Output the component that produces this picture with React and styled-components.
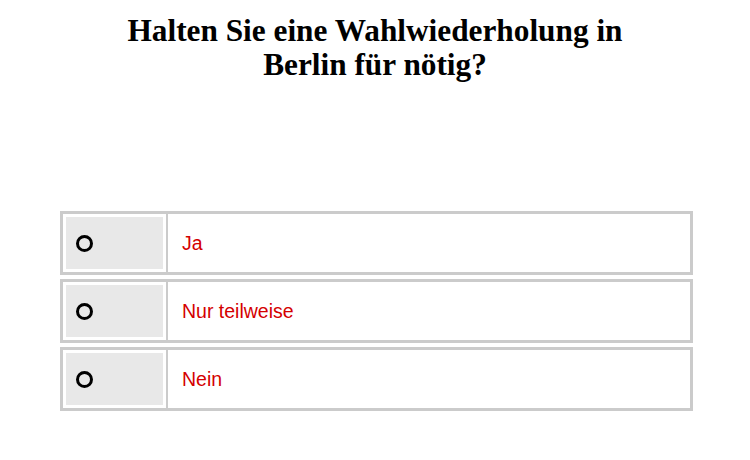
import React from 'react'
import styled, { createGlobalStyle } from 'styled-components'

const GlobalStyle = createGlobalStyle`
    body {
        margin: 0;
        background: #fff;
    }
`;

const Page = styled.div`
    width: 750px;
    height: 460px;
    display: flex;
    flex-direction: column;
    align-items: center;
`;

const Title = styled.h1`
    margin: 14px 0 0;
    width: 530px;
    text-align: center;
    font-family: "Liberation Serif", "Times New Roman", serif;
    font-weight: bold;
    font-size: 31.3px;
    line-height: 34px;
    color: #000;
`;

const Options = styled.div`
    align-self: flex-start;
    margin: 129px 0 0 60px;
    width: 633px;
    display: flex;
    flex-direction: column;
    gap: 4px;
`;

const Row = styled.label`
    display: flex;
    height: 64px;
    box-sizing: border-box;
    border: 3px solid #cbcbcb;
    cursor: pointer;
`;

const RadioCell = styled.div`
    width: 103px;
    padding: 3px;
    box-sizing: border-box;
    display: flex;
`;

const RadioBox = styled.div`
    flex: 1;
    background: #e8e8e8;
    display: flex;
    align-items: center;
    padding-left: 10px;
`;

const Circle = styled.span`
    width: 17px;
    height: 17px;
    box-sizing: border-box;
    border: 3px solid #000;
    border-radius: 50%;
`;

const Answer = styled.div`
    flex: 1;
    display: flex;
    align-items: center;
    border-left: 2px solid #cbcbcb;
    padding-left: 14px;
    font-family: "Liberation Sans", Arial, sans-serif;
    font-size: 19.5px;
    color: #d40000;
`;

const answers = ['Ja', 'Nur teilweise', 'Nein'];

export default function App() {
    return (
        <Page>
            <GlobalStyle />
            <Title>Halten Sie eine Wahlwiederholung in Berlin für nötig?</Title>
            <Options>
                {answers.map((a) => (
                    <Row key={a}>
                        <RadioCell>
                            <RadioBox>
                                <Circle />
                            </RadioBox>
                        </RadioCell>
                        <Answer>{a}</Answer>
                    </Row>
                ))}
            </Options>
        </Page>
    )
}
